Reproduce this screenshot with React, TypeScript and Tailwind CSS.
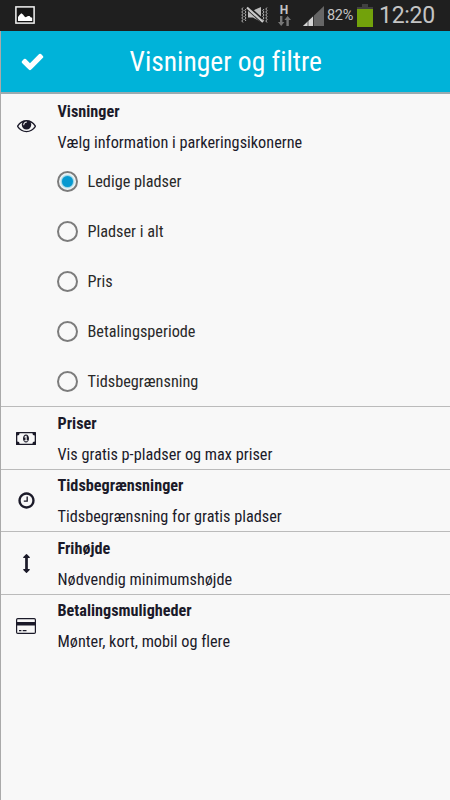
import { useState, type ReactNode } from "react";

interface Section {
  title: string;
  text: string;
  icon: ReactNode;
}

const options = ["Ledige pladser", "Pladser i alt", "Pris", "Betalingsperiode", "Tidsbegrænsning"];

const EyeIcon = () => (
  <svg viewBox="0 0 1792 1792" className="h-[19px] w-[19px]" fill="currentColor">
    <path d="M1664 960q-152-236-381-353 61 104 61 225 0 185-131.5 316.5t-316.5 131.5-316.5-131.5-131.5-316.5q0-121 61-225-229 117-381 353 133 205 333.5 326.5t434.5 121.5 434.5-121.5 333.5-326.5zm-720-384q0-20-14-34t-34-14q-125 0-214.5 89.5t-89.5 214.5q0 20 14 34t34 14 34-14 14-34q0-86 61-147t147-61q20 0 34-14t14-34zm848 384q0 34-20 69-140 230-376.5 368.5t-499.5 138.5-499.5-139-376.5-368q-20-35-20-69t20-69q140-229 376.5-368t499.5-139 499.5 139 376.5 368q20 35 20 69z" />
  </svg>
);

const CheckIcon = () => (
  <svg viewBox="0 0 1792 1792" className="h-[25px] w-[25px]" fill="currentColor">
    <path d="M1671 566q0 40-28 68l-724 724-136 136q-28 28-68 28t-68-28l-136-136-362-362q-28-28-28-68t28-68l136-136q28-28 68-28t68 28l294 295 656-657q28-28 68-28t68 28l136 136q28 28 28 68z" />
  </svg>
);

const MoneyIcon = () => (
  <svg viewBox="0 0 20 13" className="h-[13px] w-5" fill="currentColor">
    <path
      fillRule="evenodd"
      d="M.6 0h18.8q.6 0 .6.6v11.8q0 .6-.6.6H.6Q0 13 0 12.400V.6Q0 0 .6 0ZM3.600 1.300Q3.600 3.600 1.300 3.600V9.400Q3.600 9.400 3.600 11.700H16.400Q16.400 9.400 18.700 9.400V3.600Q16.400 3.600 16.400 1.300Z"
    />
    <path
      fillRule="evenodd"
      d="M10 2.500c1.800 0 3 1.800 3 4s-1.200 4-3 4-3-1.800-3-4 1.200-4 3-4ZM9.500 3.800 8.200 5l.7.800.6-.5v2.900H8.400v1h3.200v-1h-.9V3.800Z"
    />
  </svg>
);

const ClockIcon = () => (
  <svg viewBox="0 0 1792 1792" className="h-[19px] w-[19px]" fill="currentColor">
    <path d="M1024 544v448q0 14-9 23t-23 9h-320q-14 0-23-9t-9-23v-64q0-14 9-23t23-9h224v-352q0-14 9-23t23-9h64q14 0 23 9t9 23zm416 352q0-148-73-273t-198-198-273-73-273 73-198 198-73 273 73 273 198 198 273 73 273-73 198-198 73-273zm224 0q0 209-103 385.500t-279.500 279.500-385.500 103-385.500-103-279.500-279.500-103-385.500 103-385.500 279.500-279.500 385.500-103 385.500 103 279.500 279.500 103 385.500z" />
  </svg>
);

const HeightIcon = () => (
  <svg viewBox="0 0 1792 1792" className="h-[19px] w-[19px]" fill="currentColor">
    <path d="M1216 320q0 26-19 45t-45 19h-128v1024h128q26 0 45 19t19 45-19 45l-256 256q-19 19-45 19t-45-19l-256-256q-19-19-19-45t19-45 45-19h128v-1024h-128q-26 0-45-19t-19-45 19-45l256-256q19-19 45-19t45 19l256 256q19 19 19 45z" />
  </svg>
);

const CardIcon = () => (
  <svg viewBox="0 0 20 16" className="h-4 w-5">
    <rect x=".6" y=".6" width="18.800" height="14.800" rx="1.200" fill="none" stroke="currentColor" strokeWidth="1.200" />
    <path d="M1 4h18v3.600H1ZM3 12h2.400v1.200H3ZM6.700 12h3.800v1.200H6.700Z" fill="currentColor" />
  </svg>
);

const sections: Section[] = [
  { title: "Priser", text: "Vis gratis p-pladser og max priser", icon: <MoneyIcon /> },
  { title: "Tidsbegrænsninger", text: "Tidsbegrænsning for gratis pladser", icon: <ClockIcon /> },
  { title: "Frihøjde", text: "Nødvendig minimumshøjde", icon: <HeightIcon /> },
  { title: "Betalingsmuligheder", text: "Mønter, kort, mobil og flere", icon: <CardIcon /> },
];

function StatusBar() {
  return (
    <div className="flex h-[31px] items-start bg-[#1f1f1f] font-[Roboto,sans-serif] text-[#c4c4c4] font-stretch-normal">
      {/* Picture notification */}
      <svg viewBox="0 0 20 18" className="mt-1.5 ml-[15px] h-[18px] w-5">
        <rect x=".9" y=".9" width="18.200" height="16.200" fill="#151515" stroke="#f3f3f3" strokeWidth="1.500" />
        <path d="M3 15V11l1.500-2 1.800-1.800L8 8.400l1.500 2.100 1.200.8 2.300-1.200h1.600l1 1.200 1.600.5V15Z" fill="#fff" />
      </svg>

      {/* Vibrate */}
      <svg viewBox="0 0 28 18" className="mt-1.5 ml-[206px] h-[18px] w-7" fill="none">
        <path d="M7 5h4l9-4v15l-8-4.500H7Z" fill="#bdbdbd" />
        <path d="m6 1 16 14.500" stroke="#1f1f1f" strokeWidth="4.500" />
        <path d="m6 1.500 16 14.500" stroke="#c9c9c9" strokeWidth="2.200" />
        <path
          d="M2 1.500 .8 3 2 4.500.8 6 2 7.500.8 9 2 10.500.8 12 2 13.500.8 15 2 16.500M5 3 3.800 4.500 5 6 3.800 7.500 5 9 3.800 10.500 5 12 3.800 13.500 5 15M26 1.500 24.800 3 26 4.500 24.800 6 26 7.500 24.800 9 26 10.500 24.800 12 26 13.500 24.800 15 26 16.500M23 3 21.800 4.500 23 6 21.800 7.500 23 9 21.800 10.500 23 12 21.800 13.500 23 15"
          stroke="#b5b5b5"
        />
      </svg>

      {/* Mobile data */}
      <div className="ml-[8px] flex w-[14px] flex-col items-center pt-1">
        <span className="text-[12px] leading-[12px] font-bold">H</span>
        <svg viewBox="0 0 13 11" className="h-[11px] w-[13px]" fill="#777">
          <path d="M2 0h2.400v6H6.400L3.200 10 0 6H2ZM8.400 10h2.400V4H13L9.600 0 6.400 4h2Z" />
        </svg>
      </div>

      {/* Signal strength */}
      <svg viewBox="0 0 21 20" className="mt-[6px] ml-[12px] h-5 w-[21px]">
        <path d="M21 0v20H0Z" fill="#666" />
        <path d="M10 10.500V20H0Z" fill="#d5d5d5" />
        <path d="M5 13v7M10.500 8v12" stroke="#1f1f1f" strokeWidth=".7" />
      </svg>

      <span className="mt-[8px] ml-[3px] w-[27px] text-[14.500px] leading-4 tracking-[-0.3px] whitespace-nowrap">82%</span>

      <svg viewBox="0 0 16 23" className="mt-1 ml-[3px] h-[23px] w-4">
        <path d="M5 0h6v3h5v2H0V3h5Z" fill="#414141" />
        <path d="M0 5h16v18H0Z" fill="#72a20b" />
      </svg>

      <span className="mt-[2px] ml-[6px] text-[23px] leading-7 font-[370] tracking-[-0.3px] whitespace-nowrap">12:20</span>
    </div>
  );
}

function SectionText({ title, text }: { title: string; text: string }) {
  return (
    <div className="flex flex-col whitespace-nowrap">
      <h2 className="text-[16.200px] leading-[31px] font-bold">{title}</h2>
      <p className="text-[16.250px] leading-[32px] font-[390]">{text}</p>
    </div>
  );
}

export default function App() {
  const [selected, setSelected] = useState(0);

  return (
    <div className="flex h-[800px] w-[450px] flex-col overflow-hidden bg-[#f8f8f8] font-['Roboto_Condensed',Roboto,sans-serif] text-[#1b1a29] font-stretch-condensed [font-variant-ligatures:none]">
      <StatusBar />

      <div className="flex flex-1 flex-col border-l border-[#aaa]">
        <header className="flex h-[63px] shrink-0 items-center border-b-2 border-[#9aabb0] bg-[#00b3d9] text-white">
          <button className="ml-[19px] w-[25px]">
            <CheckIcon />
          </button>
          <h1 className="ml-[84.500px] text-[27.500px] leading-8 whitespace-nowrap">Visninger og filtre</h1>
        </header>

        <section className="flex h-[313px] shrink-0 border-b border-[#bbb]">
          <div className="flex w-[56.500px] justify-center pt-[22px] pr-[6px]">
            <EyeIcon />
          </div>
          <div className="flex flex-col pt-[1.500px]">
            <SectionText title="Visninger" text="Vælg information i parkeringsikonerne" />
            <div className="mt-[3.500px] flex flex-col">
              {options.map((option, index) => (
                <button
                  key={option}
                  onClick={() => setSelected(index)}
                  className="-ml-[0.500px] flex h-[50px] items-start gap-[10.500px] text-left text-[#292929]"
                >
                  <span className="mt-[9px] flex h-[21px] w-[21px] items-center justify-center rounded-full border-2 border-[#7c7c7c]">
                    {selected === index && (
                      <span className="h-[11px] w-[11px] rounded-full bg-[#0799d0] shadow-[0_0_2px_1px_#70c6df]" />
                    )}
                  </span>
                  <span className="mt-[3.500px] -ml-px text-[16.250px] leading-[32px] font-[390] whitespace-nowrap">
                    {option}
                  </span>
                </button>
              ))}
            </div>
          </div>
        </section>

        {sections.map((section, index) => (
          <section
            key={section.title}
            className={`flex h-[62.500px] shrink-0 pt-[0.500px] ${index < sections.length - 1 ? "border-b border-[#bbb]" : ""}`}
          >
            <div className="flex w-[56.500px] items-center justify-center pr-[6px]">{section.icon}</div>
            <SectionText title={section.title} text={section.text} />
          </section>
        ))}
      </div>
    </div>
  );
}
